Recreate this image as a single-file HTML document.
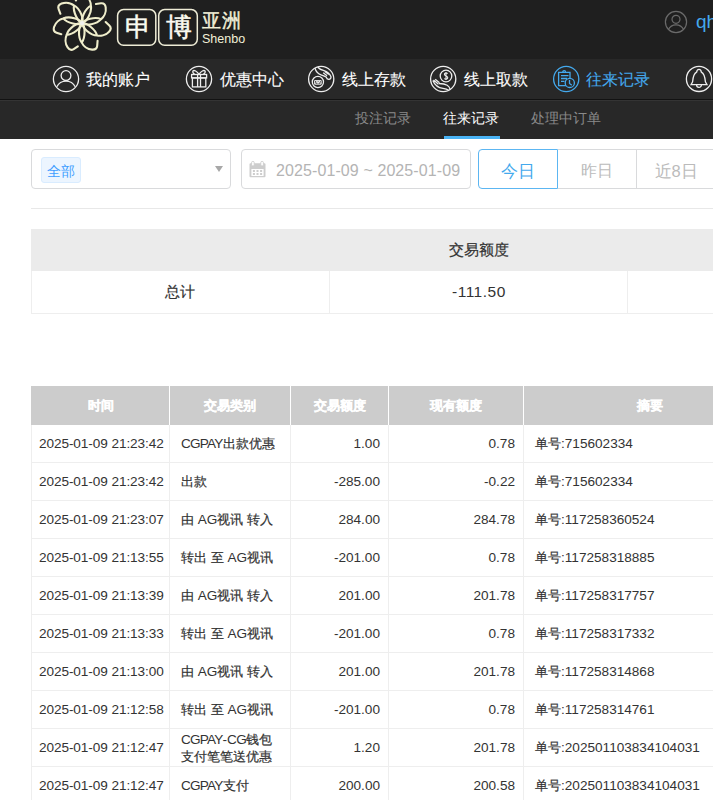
<!DOCTYPE html>
<html><head><meta charset="utf-8">
<style>
*{box-sizing:border-box;margin:0;padding:0}
html,body{width:713px;height:800px;overflow:hidden;background:#fff}
body{font-family:"Liberation Sans",sans-serif;position:relative;color:#333}
.abs{position:absolute;white-space:nowrap}
#top{position:absolute;left:0;top:0;width:713px;height:59px;background:#1f1f1f}
#nav{position:absolute;left:0;top:59px;width:713px;height:40px;background:#282828}
#l1{position:absolute;left:0;top:99px;width:713px;height:1px;background:#121212}
#sub{position:absolute;left:0;top:100px;width:713px;height:39px;background:#282828;border-top:1px solid #343434}
.navt{-webkit-text-stroke:0.1px currentColor;position:absolute;top:68.5px;font-size:15.6px;line-height:22px;color:#fff}
.subt{position:absolute;top:107px;font-size:14px;line-height:22px;color:#8a8a8a}
svg{position:absolute;overflow:visible}
#mt{position:absolute;left:31px;top:386px;border-collapse:collapse;table-layout:fixed;width:745px;font-size:13.6px;color:#333}
#mt th{height:39px;background:#ccc;color:#fff;font-weight:bold;-webkit-text-stroke:0.3px #fff;font-size:13px;border-left:1px solid #fff;text-align:center;padding:0}
#mt th:first-child{border-left:1px solid #ccc}
#mt tbody tr:first-child td{height:37px}
#mt td{height:38px;border:1px solid #eee;border-top:none;padding:0 8px;white-space:nowrap;line-height:17px}
#mt td.c1{padding:0 0 0 7px;letter-spacing:-0.08px}
#mt td.c2{padding-left:11px}
#mt td.c3,#mt td.c4{text-align:right}
#mt td.c5{padding-left:11px}
.z{font-size:13px;-webkit-text-stroke:0.2px #333}
.cap{letter-spacing:-0.8px}
#mt td.two{padding-top:3px;line-height:16.5px}
</style></head><body>
<div id="top"></div>
<div id="nav"></div>
<div id="l1"></div>
<div id="sub"></div>
<!-- logo flower -->
<svg style="left:0;top:0" width="713" height="59" viewBox="0 0 713 59">
<defs><path id="arm" d="M0,0 C3,3.6 14,4.2 19.5,0 C22.5,-1.5 26,-5.5 26.3,-10.5 C26.5,-14 25,-15.3 22.5,-15.5 L17.5,-15.8 M0,0 C3,-3.2 14,-3.8 19.5,0"/></defs>
<g transform="translate(82.1,23.1)" fill="none" stroke="#efedcb" stroke-width="2.1" stroke-linecap="round" stroke-linejoin="round"><use href="#arm" transform="rotate(-11.80)"/><use href="#arm" transform="rotate(-63.23)"/><use href="#arm" transform="rotate(-114.66)"/><use href="#arm" transform="rotate(-166.09)"/><use href="#arm" transform="rotate(-217.52)"/><use href="#arm" transform="rotate(-268.95)"/><use href="#arm" transform="rotate(-320.38)"/><circle r="2.2" fill="#f2f2ee" stroke="none"/></g>
<rect x="117.6" y="9.6" width="38.2" height="35.6" rx="6" fill="none" stroke="#eeecd6" stroke-width="1.5"/>
<rect x="158.7" y="9.6" width="38.6" height="35.6" rx="6" fill="none" stroke="#eeecd6" stroke-width="1.5"/>
<!-- top-right user -->
<g transform="translate(665,11)" fill="none" stroke="#6a6a6a" stroke-width="1.2">
<circle cx="11" cy="11" r="10.6"/><circle cx="11" cy="8.3" r="4"/><path d="M3.3,18.7 A8.5,8.5 0 0 1 18.7,18.7"/>
</g>
</svg>
<div class="abs" style="left:124.5px;top:10px;font-size:26px;line-height:34px;color:#fbfaf0;-webkit-text-stroke:0.5px #fbfaf0">申</div>
<div class="abs" style="left:165.5px;top:10px;font-size:26px;line-height:34px;color:#fbfaf0;-webkit-text-stroke:0.5px #fbfaf0">博</div>
<div class="abs" style="left:202px;top:9.5px;font-size:18.5px;-webkit-text-stroke:0.4px #f2f0d8;line-height:22px;color:#f2f0d8;letter-spacing:1.2px">亚洲</div>
<div class="abs" style="left:202px;top:31px;font-size:12.5px;line-height:16px;color:#f2f0d8">Shenbo</div>
<div class="abs" style="left:696px;top:11.3px;font-size:19px;line-height:22px;color:#44a9ed">qh</div>

<!-- nav icons -->
<svg style="left:0;top:59px" width="713" height="40" viewBox="0 59 713 40">
<g transform="translate(53,66)" fill="none" stroke="#eee" stroke-width="1.3">
<circle cx="13" cy="13" r="12.6"/><circle cx="13" cy="9.6" r="4.9"/><path d="M3.8,20.8 A10.3,10.3 0 0 1 22.2,20.8"/>
</g>
<g transform="translate(186,66)" fill="none" stroke="#eee" stroke-width="1.3">
<circle cx="13" cy="13" r="12.6"/>
<rect x="5.6" y="8.5" width="15" height="3.4"/><rect x="6.4" y="11.9" width="13.4" height="9"/>
<path d="M11.6,8.5 V20.9 M14.5,8.5 V20.9 M13,8.3 C11,5 8,3.8 7,5 C6.2,6 7.5,8 9,8.5 M13,8.3 C15,5 18,3.8 19,5 C19.8,6 18.5,8 17,8.5"/>
</g>
<g transform="translate(308,66)" fill="none" stroke="#eee" stroke-width="1.3">
<circle cx="13.2" cy="13" r="12.6"/><circle cx="9.9" cy="16" r="5.6"/>
<path d="M6.6,14.6 H13.2 V18.2 H6.6 Z M7.6,17.6 L9,15 L10,17.6 L11.2,15 L12.4,17.6" stroke-width="1"/>
<path d="M7,2.2 C7.8,5.5 10,7.8 13,8.8 C15,9.5 17,10.2 18.4,11.3 A2.3,2.3 0 0 0 23,10.8 C21.8,7.8 19,5.5 16,4.6 C13.5,4 11,2.8 9.8,1.25 M15.2,6.8 L19,9.8 M16.8,5.6 L20.8,8.6"/>
</g>
<g transform="translate(430,66)" fill="none" stroke="#eee" stroke-width="1.3">
<circle cx="13.2" cy="13" r="12.6"/><circle cx="16" cy="10" r="5.8"/>
<path d="M17.6,7.6 C17,6.8 14.3,6.7 14.4,8.4 C14.5,10 17.8,9.8 17.8,11.7 C17.8,13.5 15,13.4 14.3,12.5 M16,6 V14" stroke-width="1.1"/>
<path d="M2.8,14.5 C4.5,18.5 8,21.8 13,22.3 C15.5,22.6 17.5,23.4 19,24.6 M3.5,14 L8.5,18.2 M5.2,13.2 L9.5,16.8 M9,17.5 C12,17.6 15,18 17.2,19.3 C18.8,20.3 19.8,22 20.2,23.6"/>
</g>
<g transform="translate(553,66)" fill="none" stroke="#44a9ed" stroke-width="1.3">
<circle cx="13.2" cy="13" r="12.6"/>
<path d="M13.5,19.6 H5.6 V6.3 H17 V12"/>
<path d="M9.8,6.3 C9.8,4 12.6,4 12.6,6.3"/>
<path d="M8,9.6 H15.5 M8,12.5 H14 M8,15.3 H11.5"/>
<circle cx="16.8" cy="16.9" r="4.6" fill="#282828"/>
<path d="M16.5,14 V17.4 L18.8,19.2"/>
</g>
<g transform="translate(686,66)" fill="none" stroke="#eee" stroke-width="1.3">
<circle cx="13" cy="12.9" r="12.6"/>
<path d="M5,18.7 L6.6,15.8 C7,11 7.5,7.8 10.6,6.2 C11,4.2 12,3.4 13,3.4 C14,3.4 15,4.2 15.4,6.2 C18.5,7.8 19,11 19.4,15.8 L21,18.7 Z"/>
<path d="M10.6,18.9 A2.4,2.4 0 0 0 15.4,18.9"/>
</g>
</svg>
<div class="navt" style="left:86px">我的账户</div>
<div class="navt" style="left:220px">优惠中心</div>
<div class="navt" style="left:342px">线上存款</div>
<div class="navt" style="left:464px">线上取款</div>
<div class="navt" style="left:586px;color:#44a9ed">往来记录</div>

<div class="subt" style="left:355px">投注记录</div>
<div class="subt" style="left:443px;color:#fff">往来记录</div>
<div class="subt" style="left:531px">处理中订单</div>
<div class="abs" style="left:444px;top:136px;width:56px;height:3px;background:#4ab3f4"></div>


<!-- filter -->
<div class="abs" style="left:31px;top:149px;width:200px;height:40px;border:1px solid #d9dadc;border-radius:4px"></div>
<div class="abs" style="left:41px;top:157px;width:40px;height:26px;border:1px solid #d9ecff;background:#ecf5ff;border-radius:3px"></div>
<div class="abs" style="left:46.5px;top:160px;font-size:14.4px;line-height:22px;color:#409eff">全部</div>
<svg style="left:215px;top:166px" width="8" height="6" viewBox="0 0 8 6"><path d="M0,0 H8 L4,6 Z" fill="#a8a8a8"/></svg>
<div class="abs" style="left:241px;top:149px;width:230px;height:40px;border:1px solid #d9dadc;border-radius:4px"></div>
<svg style="left:249px;top:161px" width="17" height="17" viewBox="0 0 17 17">
<path fill="#cdcdcd" d="M1.5,2.3 H15.5 A1,1 0 0 1 16.5,3.3 V15.3 A1,1 0 0 1 15.5,16.3 H1.5 A1,1 0 0 1 0.5,15.3 V3.3 A1,1 0 0 1 1.5,2.3 Z M2.4,7.9 V14.9 H14.6 V7.9 Z"/>
<rect x="2.6" y="0.4" width="2.6" height="4.6" rx="1.2" fill="#fff" stroke="#cdcdcd" stroke-width="0.9"/>
<rect x="11.8" y="0.4" width="2.6" height="4.6" rx="1.2" fill="#fff" stroke="#cdcdcd" stroke-width="0.9"/>
<rect x="3.9" y="9" width="2" height="2" fill="#cdcdcd"/><rect x="7.5" y="9" width="2" height="2" fill="#cdcdcd"/><rect x="11.1" y="9" width="2" height="2" fill="#cdcdcd"/>
<rect x="3.9" y="12" width="2" height="2" fill="#cdcdcd"/><rect x="7.5" y="12" width="2" height="2" fill="#cdcdcd"/><rect x="11.1" y="12" width="2" height="2" fill="#cdcdcd"/>
</svg>
<div class="abs" style="left:276px;top:159.5px;font-size:16px;line-height:22px;color:#b4b4b4;letter-spacing:0.1px">2025-01-09 ~ 2025-01-09</div>
<div class="abs" style="left:558px;top:149px;width:200px;height:40px;border:1px solid #d9dadc;border-left:none"></div>
<div class="abs" style="left:636px;top:149px;width:1px;height:40px;background:#d9dadc"></div>
<div class="abs" style="left:715px;top:149px;width:1px;height:40px;background:#d9dadc"></div>
<div class="abs" style="left:478px;top:149px;width:80px;height:40px;border:1px solid #5cb6f2;border-radius:4px 0 0 4px"></div>
<div class="abs" style="left:501px;top:159.5px;font-size:16.5px;line-height:22px;color:#44a9ed">今日</div>
<div class="abs" style="left:580.5px;top:159.5px;font-size:16px;line-height:22px;color:#bbb">昨日</div>
<div class="abs" style="left:654.5px;top:159.5px;font-size:16.5px;line-height:22px;color:#bbb">近8日</div>
<div class="abs" style="left:31px;top:208px;width:700px;height:1px;background:#e8e8e8"></div>

<!-- summary -->
<div class="abs" style="left:31px;top:229px;width:894px;height:42px;background:#ebebeb"></div>
<div class="abs" style="left:31px;top:271px;width:894px;height:43px;border:1px solid #eee;border-top:none"></div>
<div class="abs" style="left:329px;top:271px;width:1px;height:42px;background:#eee"></div>
<div class="abs" style="left:627px;top:271px;width:1px;height:42px;background:#eee"></div>
<div class="abs" style="left:448.5px;top:239px;font-size:15px;line-height:22px;color:#333;-webkit-text-stroke:0.2px #333">交易额度</div>
<div class="abs" style="left:165px;top:281px;font-size:15px;line-height:22px;color:#333;-webkit-text-stroke:0.2px #333">总计</div>
<div class="abs" style="left:452px;top:281px;font-size:15.5px;line-height:22px;color:#333;letter-spacing:0.5px">-111.50</div>

<!-- main table -->
<table id="mt">
<colgroup><col style="width:138px"><col style="width:121px"><col style="width:98px"><col style="width:135px"><col style="width:253px"></colgroup>
<thead><tr><th>时间</th><th>交易类别</th><th>交易额度</th><th>现有额度</th><th>摘要</th></tr></thead>
<tbody><tr><td class="c1">2025-01-09 21:23:42</td><td class="c2"><span class="cap">CGPAY</span><span class="z">出款优惠</span></td><td class="c3">1.00</td><td class="c4">0.78</td><td class="c5"><span class="z">单号</span>:715602334</td></tr><tr><td class="c1">2025-01-09 21:23:42</td><td class="c2"><span class="z">出款</span></td><td class="c3">-285.00</td><td class="c4">-0.22</td><td class="c5"><span class="z">单号</span>:715602334</td></tr><tr><td class="c1">2025-01-09 21:23:07</td><td class="c2"><span class="z">由</span> AG<span class="z">视讯</span> <span class="z">转入</span></td><td class="c3">284.00</td><td class="c4">284.78</td><td class="c5"><span class="z">单号</span>:117258360524</td></tr><tr><td class="c1">2025-01-09 21:13:55</td><td class="c2"><span class="z">转出</span> <span class="z">至</span> AG<span class="z">视讯</span></td><td class="c3">-201.00</td><td class="c4">0.78</td><td class="c5"><span class="z">单号</span>:117258318885</td></tr><tr><td class="c1">2025-01-09 21:13:39</td><td class="c2"><span class="z">由</span> AG<span class="z">视讯</span> <span class="z">转入</span></td><td class="c3">201.00</td><td class="c4">201.78</td><td class="c5"><span class="z">单号</span>:117258317757</td></tr><tr><td class="c1">2025-01-09 21:13:33</td><td class="c2"><span class="z">转出</span> <span class="z">至</span> AG<span class="z">视讯</span></td><td class="c3">-201.00</td><td class="c4">0.78</td><td class="c5"><span class="z">单号</span>:117258317332</td></tr><tr><td class="c1">2025-01-09 21:13:00</td><td class="c2"><span class="z">由</span> AG<span class="z">视讯</span> <span class="z">转入</span></td><td class="c3">201.00</td><td class="c4">201.78</td><td class="c5"><span class="z">单号</span>:117258314868</td></tr><tr><td class="c1">2025-01-09 21:12:58</td><td class="c2"><span class="z">转出</span> <span class="z">至</span> AG<span class="z">视讯</span></td><td class="c3">-201.00</td><td class="c4">0.78</td><td class="c5"><span class="z">单号</span>:117258314761</td></tr><tr><td class="c1">2025-01-09 21:12:47</td><td class="c2 two"><span class="cap">CGPAY</span>-<span class="cap">CG</span><span class="z">钱包</span><br><span class="z">支付笔笔送优惠</span></td><td class="c3">1.20</td><td class="c4">201.78</td><td class="c5"><span class="z">单号</span>:202501103834104031</td></tr><tr><td class="c1">2025-01-09 21:12:47</td><td class="c2"><span class="cap">CGPAY</span><span class="z">支付</span></td><td class="c3">200.00</td><td class="c4">200.58</td><td class="c5"><span class="z">单号</span>:202501103834104031</td></tr></tbody>
</table>

</body></html>
